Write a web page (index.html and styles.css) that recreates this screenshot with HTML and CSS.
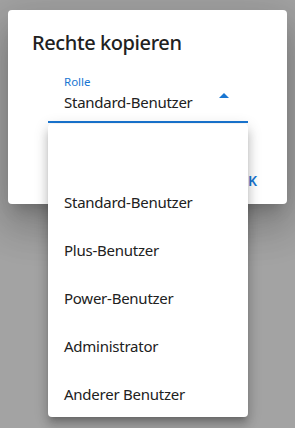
FILE: index.html
```html
<!DOCTYPE html>
<html lang="de">
<head>
<meta charset="utf-8">
<title>Rechte kopieren</title>
<link rel="stylesheet" href="styles.css">
</head>
<body>
<div class="dialog">
  <h2 class="title">Rechte kopieren</h2>
  <div class="field">
    <div class="label">Rolle</div>
    <div class="value">Standard-Benutzer</div>
    <svg class="arrow" width="10" height="5" viewBox="0 0 10 5"><polygon points="0,5 5,0 10,5" fill="#1976d2"/></svg>
  </div>
  <div class="actions">
    <button class="btn">OK</button>
  </div>
</div>
<ul class="menu">
  <li class="item"></li>
  <li class="item">Standard-Benutzer</li>
  <li class="item">Plus-Benutzer</li>
  <li class="item">Power-Benutzer</li>
  <li class="item">Administrator</li>
  <li class="item">Anderer Benutzer</li>
</ul>
</body>
</html>
```
FILE: styles.css
```css
html, body {
  margin: 0;
  padding: 0;
}
body {
  position: relative;
  width: 295px;
  height: 428px;
  overflow: hidden;
  background: #a3a3a3;
  font-family: "Noto Sans", "Open Sans", sans-serif;
  color: rgba(0, 0, 0, 0.87);
}
.dialog {
  margin: 10px 8px 0;
  height: 194px;
  box-sizing: border-box;
  background: #fff;
  border-radius: 4px;
  box-shadow: 0 11px 15px -7px rgba(0,0,0,.2), 0 24px 38px 3px rgba(0,0,0,.14), 0 9px 46px 8px rgba(0,0,0,.12);
  display: flex;
  flex-direction: column;
  padding-top: 17px;
}
.title {
  margin: 0;
  padding: 0 24px;
  font-size: 20px;
  font-weight: 500;
  letter-spacing: -0.4px;
  line-height: 32px;
  color: #212121;
}
.field {
  position: relative;
  margin: 15px 0 0 40px;
  width: 200px;
  box-sizing: border-box;
  padding: 0 16px 7px;
  border-bottom: 2px solid #1976d2;
}
.label {
  font-size: 11.5px;
  line-height: 16px;
  color: #1976d2;
}
.value {
  font-size: 15px;
  letter-spacing: -0.25px;
  line-height: 24px;
  color: #212121;
}
.arrow {
  position: absolute;
  right: 19px;
  top: 19px;
}
.actions {
  margin-top: auto;
  display: flex;
  justify-content: flex-end;
  padding: 0 8px 5px;
}
.btn {
  font-family: inherit;
  font-size: 14px;
  font-weight: 600;
  line-height: 36px;
  height: 36px;
  min-width: 64px;
  padding: 0 8px;
  border: 0;
  background: transparent;
  color: #1976d2;
  text-transform: uppercase;
}
.menu {
  position: absolute;
  left: 48px;
  top: 124px;
  width: 200px;
  height: 293px;
  margin: 0;
  padding: 6px 0 0;
  box-sizing: border-box;
  list-style: none;
  background: #fff;
  border-radius: 4px;
  overflow: hidden;
  box-shadow: 0 5px 5px -3px rgba(0,0,0,.2), 0 8px 10px 1px rgba(0,0,0,.14), 0 3px 14px 2px rgba(0,0,0,.12);
}
.item {
  height: 48px;
  display: flex;
  align-items: center;
  padding: 0 16px;
  font-size: 15px;
  letter-spacing: -0.25px;
  line-height: 24px;
  color: #212121;
}
```
